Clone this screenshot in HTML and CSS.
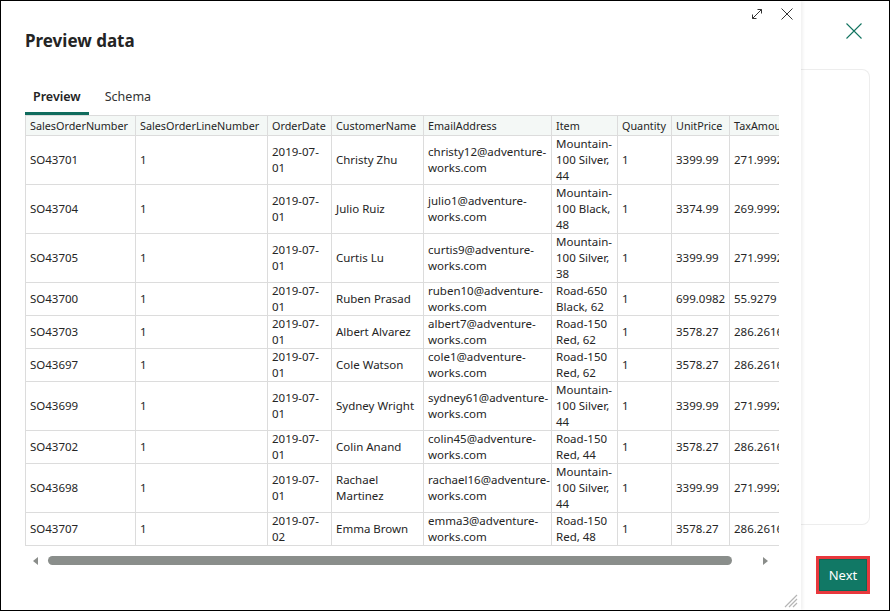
FILE: index.html
```html
<!DOCTYPE html>
<html lang="en">
<head>
<meta charset="utf-8">
<title>Preview data</title>
<link rel="stylesheet" href="styles.css">
</head>
<body>
<div class="screen">
  <section class="dialog">
    <div class="toolbar">
      <svg class="tool-icon" width="14" height="14" viewBox="0 0 14 14" aria-label="Expand">
        <path d="M2.5 11.5 L11.5 2.5 M7.5 2.5 H11.5 V6.5 M2.5 7.5 V11.5 H6.5" fill="none" stroke="#333" stroke-width="1"/>
      </svg>
      <svg class="tool-icon" width="14" height="14" viewBox="0 0 14 14" aria-label="Close">
        <path d="M1.5 1.5 L12.5 12.5 M12.5 1.5 L1.5 12.5" fill="none" stroke="#333" stroke-width="1"/>
      </svg>
    </div>
    <h1 class="title">Preview data</h1>
    <nav class="tabs">
      <div class="tab active">Preview</div>
      <div class="tab">Schema</div>
    </nav>
    <div class="grid-wrap">
      <table class="grid">
        <colgroup>
          <col style="width:110px"><col style="width:132px"><col style="width:64px"><col style="width:92px"><col style="width:128px"><col style="width:66px"><col style="width:54px"><col style="width:58px"><col style="width:90px">
        </colgroup>
        <thead>
          <tr><th>SalesOrderNumber</th><th>SalesOrderLineNumber</th><th>OrderDate</th><th>CustomerName</th><th>EmailAddress</th><th>Item</th><th>Quantity</th><th>UnitPrice</th><th>TaxAmount</th></tr>
        </thead>
        <tbody>
          <tr><td>SO43701</td><td>1</td><td>2019-07-<wbr>01</td><td>Christy Zhu</td><td>christy12@adventure-<wbr>works.com</td><td>Mountain-<wbr>100 Silver, 44</td><td>1</td><td>3399.99</td><td>271.9992</td></tr>
          <tr><td>SO43704</td><td>1</td><td>2019-07-<wbr>01</td><td>Julio Ruiz</td><td>julio1@adventure-<wbr>works.com</td><td>Mountain-<wbr>100 Black, 48</td><td>1</td><td>3374.99</td><td>269.9992</td></tr>
          <tr><td>SO43705</td><td>1</td><td>2019-07-<wbr>01</td><td>Curtis Lu</td><td>curtis9@adventure-<wbr>works.com</td><td>Mountain-<wbr>100 Silver, 38</td><td>1</td><td>3399.99</td><td>271.9992</td></tr>
          <tr><td>SO43700</td><td>1</td><td>2019-07-<wbr>01</td><td>Ruben Prasad</td><td>ruben10@adventure-<wbr>works.com</td><td>Road-650 Black, 62</td><td>1</td><td>699.0982</td><td>55.9279</td></tr>
          <tr><td>SO43703</td><td>1</td><td>2019-07-<wbr>01</td><td>Albert Alvarez</td><td>albert7@adventure-<wbr>works.com</td><td>Road-150 Red, 62</td><td>1</td><td>3578.27</td><td>286.2616</td></tr>
          <tr><td>SO43697</td><td>1</td><td>2019-07-<wbr>01</td><td>Cole Watson</td><td>cole1@adventure-<wbr>works.com</td><td>Road-150 Red, 62</td><td>1</td><td>3578.27</td><td>286.2616</td></tr>
          <tr><td>SO43699</td><td>1</td><td>2019-07-<wbr>01</td><td>Sydney Wright</td><td>sydney61@adventure-<wbr>works.com</td><td>Mountain-<wbr>100 Silver, 44</td><td>1</td><td>3399.99</td><td>271.9992</td></tr>
          <tr><td>SO43702</td><td>1</td><td>2019-07-<wbr>01</td><td>Colin Anand</td><td>colin45@adventure-<wbr>works.com</td><td>Road-150 Red, 44</td><td>1</td><td>3578.27</td><td>286.2616</td></tr>
          <tr><td>SO43698</td><td>1</td><td>2019-07-<wbr>01</td><td>Rachael Martinez</td><td>rachael16@adventure-<wbr>works.com</td><td>Mountain-<wbr>100 Silver, 44</td><td>1</td><td>3399.99</td><td>271.9992</td></tr>
          <tr><td>SO43707</td><td>1</td><td>2019-07-<wbr>02</td><td>Emma Brown</td><td>emma3@adventure-<wbr>works.com</td><td>Road-150 Red, 48</td><td>1</td><td>3578.27</td><td>286.2616</td></tr>
        </tbody>
      </table>
    </div>
    <div class="hscroll">
      <span class="arrow arrow-left"></span>
      <div class="track"><div class="thumb"></div></div>
      <span class="arrow arrow-right"></span>
    </div>
    <svg class="resize" width="14" height="14" viewBox="0 0 14 14" aria-hidden="true">
      <path d="M13 1 L1 13 M13 5 L5 13 M13 9 L9 13" stroke="#b5b5b5" stroke-width="1.2" fill="none"/>
    </svg>
  </section>
  <aside class="side">
    <svg class="side-close" width="16" height="16" viewBox="0 0 16 16" aria-label="Close">
      <path d="M0.5 0.5 L15.5 15.5 M15.5 0.5 L0.5 15.5" fill="none" stroke="#11735f" stroke-width="1.1"/>
    </svg>
    <div class="side-card"></div>
    <div class="next-outline"><button class="next">Next</button></div>
  </aside>
</div>
</body>
</html>
```

FILE: styles.css
```css
* { box-sizing: border-box; }
html, body { margin: 0; padding: 0; background: #fff; }
body {
  font-family: "Noto Sans", "Open Sans", "Liberation Sans", sans-serif;
  color: #242424;
}
.screen {
  width: 890px;
  height: 611px;
  border: 1px solid #000;
  display: flex;
  overflow: hidden;
  background: #fff;
}
.dialog {
  position: relative;
  z-index: 2;
  width: 800px;
  height: 100%;
  flex: none;
  background: #fff;
  padding: 0 7px 0 24px;
  box-shadow: 2px 0 3px rgba(0, 0, 0, 0.06);
  display: flex;
  flex-direction: column;
}
.toolbar {
  height: 28px;
  padding-top: 6px;
  display: flex;
  justify-content: flex-end;
  gap: 16px;
}
.tool-icon { display: block; }
.title {
  margin: 0;
  font-size: 17px;
  line-height: 24px;
  font-weight: 700;
  color: #242424;
}
.tabs {
  margin-top: 34px;
  display: flex;
  gap: 8px;
}
.tab {
  padding: 0 8px 5px;
  font-size: 12.5px;
  line-height: 20px;
  color: #333;
  border-bottom: 3px solid transparent;
}
.tab.active {
  font-weight: 600;
  color: #242424;
  border-bottom-color: #106c5d;
}
.grid-wrap {
  width: 754px;
  overflow: hidden;
}
.grid {
  border-collapse: collapse;
  table-layout: fixed;
  width: 784px;
  font-size: 11.5px;
  line-height: 16px;
  color: #252525;
}
.grid th, .grid td {
  border: 1px solid #dcdcdc;
  padding: 0 4px;
  text-align: left;
  vertical-align: middle;
  white-space: normal;
  overflow: hidden;
}
.grid th {
  font-weight: 400;
  font-size: 10.8px;
  background: #f4f8f6;
  height: 20px;
  white-space: nowrap;
  line-height: 18px;
}
.grid td { height: 33px; }
.hscroll {
  margin-top: 10px;
  height: 9px;
  display: flex;
  align-items: center;
  width: 754px;
}
.arrow {
  width: 0;
  height: 0;
  border-top: 4px solid transparent;
  border-bottom: 4px solid transparent;
}
.arrow-left {
  margin-left: 8px;
  border-right: 5px solid #8a8d8a;
}
.arrow-right {
  margin-left: 31px;
  border-left: 5px solid #8a8d8a;
}
.track {
  margin-left: 10px;
  width: 684px;
  height: 9px;
}
.thumb {
  width: 100%;
  height: 9px;
  border-radius: 5px;
  background: #8a8e8b;
}
.resize {
  position: absolute;
  right: 3px;
  bottom: 2px;
}
.side {
  flex: 1;
  display: flex;
  flex-direction: column;
  align-items: flex-start;
}
.side-close {
  display: block;
  margin: 22px 0 0 45px;
}
.side-card {
  margin-top: 30px;
  width: 69px;
  height: 456px;
  border: 1px solid #ededed;
  border-left: none;
  border-radius: 0 8px 8px 0;
}
.next-outline {
  margin: 31px 0 0 15px;
  border: 3px solid #e8383d;
  width: 54px;
  height: 38px;
  padding: 0;
}
.next {
  display: block;
  width: 100%;
  height: 100%;
  border: 1px solid #0b6a56;
  margin: 0;
  padding: 0;
  background: #117865;
  color: #fff;
  font-family: "Noto Sans", "Open Sans", sans-serif;
  font-size: 13px;
}
```
